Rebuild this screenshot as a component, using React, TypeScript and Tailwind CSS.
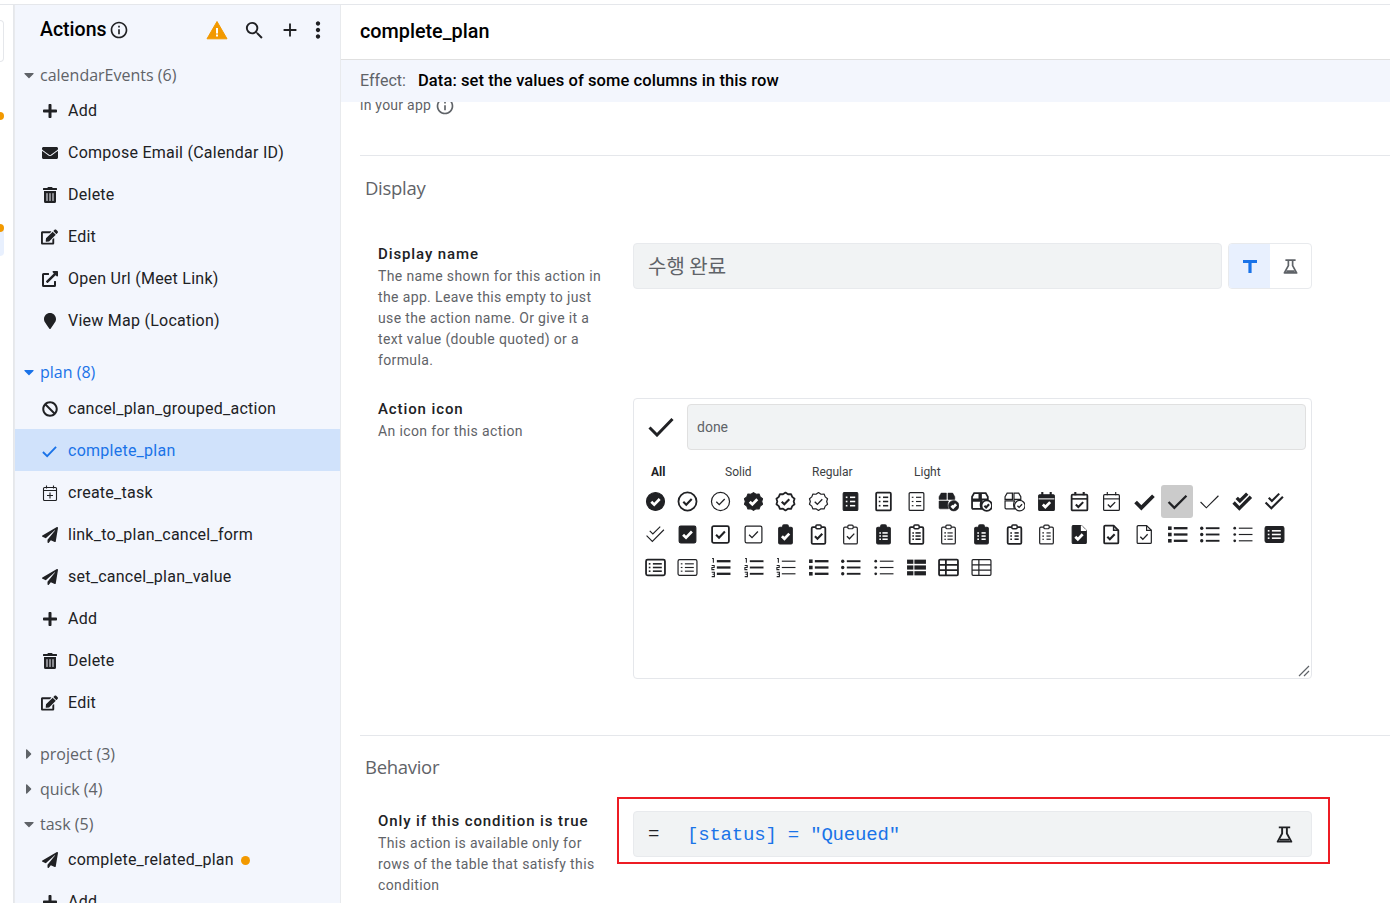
import React from 'react';
import {
  FaPlus, FaEnvelope, FaTrashAlt, FaEdit, FaExternalLinkAlt, FaMapMarker, FaBan, FaPaperPlane,
  FaCaretDown, FaCaretRight,
} from 'react-icons/fa';
import { MdSearch, MdAdd, MdMoreVert, MdOutlineInfo } from 'react-icons/md';

type Weight = 's' | 'r' | 'l';

const stroke = (w: Weight) => (w === 'r' ? 1.7 : 1.15);
const checkW = (w: Weight) => (w === 's' ? 2.6 : w === 'r' ? 2 : 1.25);

const Glyph = ({ kind, w }: { kind: string; w: Weight }) => {
  const solid = w === 's';
  const sw = stroke(w);
  const ink = '#202124';
  const body = { fill: solid ? ink : 'none', stroke: ink, strokeWidth: solid ? 1 : sw, strokeLinejoin: 'round' as const };
  const tick = (d: string) => (
    <path d={d} fill="none" stroke={solid ? '#fff' : ink} strokeWidth={checkW(w)} />
  );
  const lines = (ys: number[], x1: number, x2: number, bullets = 0) => (
    <g stroke={solid ? '#fff' : ink} strokeWidth={w === 'l' ? 1.1 : 1.5} fill="none">
      {ys.map(y => <path key={y} d={`M${x1} ${y}H${x2}`} />)}
      {bullets > 0 && ys.map(y => <path key={`b${y}`} d={`M${bullets} ${y}h1.6`} />)}
    </g>
  );
  let inner: React.ReactNode = null;
  if (kind === 'circle') {
    inner = <><circle cx="10" cy="10" r="8.6" {...body} />{tick('M6 10.2l2.8 2.8 5.2-5.4')}</>;
  } else if (kind === 'badge') {
    inner = (
      <>
        <path d="M10 1.5l2.4 1.6 2.9-.2 1.1 2.7 2.2 1.8-.8 2.6.8 2.6-2.2 1.8-1.1 2.7-2.9-.2L10 18.5l-2.4-1.6-2.9.2-1.1-2.7-2.2-1.8.8-2.6-.8-2.6 2.2-1.8 1.1-2.7 2.9.2z" {...body} />
        {tick('M6.4 10.2l2.5 2.5 4.7-4.9')}
      </>
    );
  } else if (kind === 'tasks') {
    inner = (
      <>
        <rect x="3" y="1.5" width="14" height="17" rx="1" {...body} />
        {lines([6, 10, 14], 9.5, 14.5, 5.5)}
      </>
    );
  } else if (kind === 'boxes') {
    inner = (
      <>
        <path d="M1 5.5l2-3.5h5v6H1zM9.5 2H14l2 3.5V8H9.5zM1 9.5h9c-1 2-1 5 0 7.5H2a1 1 0 01-1-1z" fill={solid ? ink : 'none'} stroke={ink} strokeWidth={solid ? 0.5 : sw} />
        <circle cx="15" cy="14" r="5" fill={solid ? ink : '#fff'} stroke={ink} strokeWidth={solid ? 0.5 : sw} />
        {tick('M12.8 14l1.6 1.6 2.8-3')}
      </>
    );
  } else if (kind === 'calendar') {
    inner = (
      <>
        <rect x="2.5" y="3.5" width="15" height="15" rx="1" {...body} />
        <path d="M6 1v3M14 1v3" stroke={ink} strokeWidth={w === 'l' ? 1.1 : 2} />
        <path d="M2.5 7.5h15" stroke={solid ? '#fff' : ink} strokeWidth={w === 'l' ? 1.1 : solid ? 1 : 1.5} />
        {tick('M6.5 12.8l2.4 2.4 4.6-4.6')}
      </>
    );
  } else if (kind === 'check') {
    inner = <path d="M1.5 10.5l5.5 5.5L18.5 4.5" fill="none" stroke={ink} strokeWidth={w === 's' ? 3.6 : w === 'r' ? 2.2 : 1.1} />;
  } else if (kind === 'double') {
    inner = (
      <g fill="none" stroke={ink} strokeWidth={w === 's' ? 3.2 : w === 'r' ? 2 : 1.1}>
        <path d="M1.5 11l5.5 5.5 11-11" />
        <path d="M4.5 6.5l3 3 7-7" />
      </g>
    );
  } else if (kind === 'square') {
    inner = <><rect x="2" y="2" width="16" height="16" rx="1.5" {...body} />{tick('M5.8 10.2l2.8 2.8 5.6-5.8')}</>;
  } else if (kind === 'clipCheck' || kind === 'clipList' || kind === 'clipTask') {
    inner = (
      <>
        <rect x="3.5" y="3" width="13" height="16" rx="1.2" {...body} />
        <rect x="7.5" y="1" width="5" height="3.5" rx="1" fill={solid ? ink : '#fff'} stroke={ink} strokeWidth={w === 'l' ? 1.1 : 1.4} />
        {kind === 'clipCheck' && tick('M6.6 11.6l2.4 2.4 4.6-4.8')}
        {kind === 'clipList' && lines([8.5, 11.5, 14.5], 9, 14, 6)}
        {kind === 'clipTask' && lines([8.5, 11.5, 14.5], 10, 14, 6)}
      </>
    );
  } else if (kind === 'file') {
    inner = (
      <>
        <path d="M4 1.5h8l4.5 4.5v11.5a1 1 0 01-1 1H4a1 1 0 01-1-1v-15a1 1 0 011-1z" {...body} />
        <path d="M12 1.5V6h4.5" fill={solid ? '#fff' : 'none'} stroke={solid ? '#fff' : ink} strokeWidth={w === 'l' ? 1.1 : 1.4} />
        {tick('M6 12.2l2.4 2.4 4.6-4.8')}
      </>
    );
  } else if (kind === 'ul') {
    inner = (
      <>
        <g fill={ink}>
          {[4, 10, 16].map(y => (w === 's'
            ? <rect key={y} x="1" y={y - 1.7} width="3.4" height="3.4" />
            : <circle key={y} cx="2.6" cy={y} r={w === 'r' ? 1.6 : 1.3} />))}
        </g>
        <g stroke={ink} strokeWidth={w === 's' ? 2.2 : w === 'r' ? 1.8 : 1.1}>
          {[4, 10, 16].map(y => <path key={y} d={`M6.5 ${y}H19.5`} />)}
        </g>
      </>
    );
  } else if (kind === 'alt') {
    inner = (
      <>
        <rect x="1" y="2.5" width="18" height="15" rx="1.5" {...body} />
        {lines([6.5, 10, 13.5], 7.5, 16, 3.6)}
      </>
    );
  } else if (kind === 'ol') {
    inner = (
      <>
        <g fill="none" stroke={ink} strokeWidth="1">
          <path d="M2 1.5h1.2v4" />
          <path d="M1.6 8h2.4v2H1.8v2h2.4" />
          <path d="M1.6 14.5h2.6v2H2.4h1.8v2.2H1.6" />
        </g>
        <g stroke={ink} strokeWidth={w === 's' ? 2.2 : w === 'r' ? 1.8 : 1.1}>
          {[4, 10, 16].map(y => <path key={y} d={`M6.5 ${y}H19.5`} />)}
        </g>
      </>
    );
  } else if (kind === 'table') {
    inner = solid ? (
      <g fill={ink}>
        <rect x="1" y="2.5" width="6" height="4" /><rect x="8" y="2.5" width="11" height="4" />
        <rect x="1" y="8" width="6" height="4" /><rect x="8" y="8" width="11" height="4" />
        <rect x="1" y="13.5" width="6" height="4" /><rect x="8" y="13.5" width="11" height="4" />
      </g>
    ) : (
      <>
        <rect x="1" y="2.5" width="18" height="15" rx="1" fill="none" stroke={ink} strokeWidth={sw} />
        <path d="M1 7.5h18M1 12.5h18M7.5 2.5v15" fill="none" stroke={ink} strokeWidth={sw} />
      </>
    );
  }
  return (
    <svg viewBox="0 0 20 20" className="w-[21px] h-[21px]">
      {inner}
    </svg>
  );
};

const glyphs: [string, Weight][] = [
  ['circle', 's'], ['circle', 'r'], ['circle', 'l'], ['badge', 's'], ['badge', 'r'], ['badge', 'l'],
  ['tasks', 's'], ['tasks', 'r'], ['tasks', 'l'], ['boxes', 's'], ['boxes', 'r'], ['boxes', 'l'],
  ['calendar', 's'], ['calendar', 'r'], ['calendar', 'l'], ['check', 's'], ['check', 'r'], ['check', 'l'],
  ['double', 's'], ['double', 'r'], ['double', 'l'], ['square', 's'], ['square', 'r'], ['square', 'l'],
  ['clipCheck', 's'], ['clipCheck', 'r'], ['clipCheck', 'l'], ['clipList', 's'], ['clipList', 'r'], ['clipList', 'l'],
  ['clipTask', 's'], ['clipTask', 'r'], ['clipTask', 'l'], ['file', 's'], ['file', 'r'], ['file', 'l'],
  ['ul', 's'], ['ul', 'r'], ['ul', 'l'], ['alt', 's'], ['alt', 'r'], ['alt', 'l'],
  ['ol', 's'], ['ol', 'r'], ['ol', 'l'], ['ul', 's'], ['ul', 'r'], ['ul', 'l'],
  ['table', 's'], ['table', 'r'], ['table', 'l'],
];

const Flask = ({ className }: { className: string }) => (
  <svg viewBox="0 0 20 20" className={className}>
    <path d="M4 2.5h12M7.5 3v6L2.8 17.5h14.4L12.5 9V3" fill="none" stroke="currentColor" strokeWidth="2" strokeLinejoin="round" />
    <path d="M5 15.5h10" fill="none" stroke="currentColor" strokeWidth="2" />
  </svg>
);

const CalendarAdd = () => (
  <svg viewBox="0 0 16 16" className="w-[16px] h-[16px]">
    <rect x="1.5" y="2.5" width="13" height="13" rx="1" fill="none" stroke="#202124" strokeWidth="1.1" />
    <path d="M4.5 0.5v3M11.5 0.5v3M1.5 5.5h13M8 7.5v6M5 10.5h6" fill="none" stroke="#202124" strokeWidth="1.1" />
  </svg>
);

const CheckThin = () => (
  <svg viewBox="0 0 16 16" className="w-[15px] h-[15px]">
    <path d="M1 8.5l4.5 4.5L15 3" fill="none" stroke="#1a73e8" strokeWidth="2" />
  </svg>
);

const Row = ({ icon, label, active, dot }: { icon: React.ReactNode; label: string; active?: boolean; dot?: boolean }) => (
  <div className={`h-[42px] flex items-center pl-[26px] pt-[2px] ${active ? 'bg-[#d0e2fb] text-[#1a73e8]' : 'text-[#202124]'}`}>
    <span className="w-[17px] flex justify-center text-[16px] mr-[10px]">{icon}</span>
    <span className="text-[16px] tracking-[0.25px]">{label}</span>
    {dot && <span className="w-[9px] h-[9px] rounded-full bg-[#f29900] ml-[7px]" />}
  </div>
);

const Group = ({ label, open, active, className }: { label: string; open?: boolean; active?: boolean; className?: string }) => (
  <div className={`h-[28px] flex items-center pl-[8px] text-[16px] font-['Open_Sans',sans-serif] ${active ? 'text-[#1a73e8]' : 'text-[#5f6368]'} ${className ?? ''}`}>
    <span className="w-[12px] flex justify-center mr-[5px] text-[16px]">
      {open ? <FaCaretDown /> : <FaCaretRight />}
    </span>
    <span>{label}</span>
  </div>
);

const Sidebar = () => (
  <aside className="w-[327px] shrink-0 bg-[#f3f6fd] border-l border-r border-[#e8eaed]">
    <div className="h-[50px] flex items-center pl-[25px] text-[#202124]">
      <span className="text-[19.5px] font-medium text-black">Actions</span>
      <MdOutlineInfo className="w-[20px] h-[20px] ml-[2px]" />
      <svg viewBox="0 0 22 20" className="w-[22px] h-[20px] ml-[77px]">
        <path d="M11 1.5L21 18.8H1z" fill="#f29900" stroke="#f29900" strokeLinejoin="round" />
        <path d="M10 8h2v5.5h-2zM10 14.5h2v2h-2z" fill="#fff" />
      </svg>
      <MdSearch className="w-[23px] h-[23px] ml-[15px]" />
      <MdAdd className="w-[22px] h-[22px] ml-[13px]" />
      <MdMoreVert className="w-[26px] h-[26px] ml-[4px]" />
    </div>
    <div className="pt-[6px]">
      <Group label="calendarEvents (6)" open />
      <Row icon={<FaPlus />} label="Add" />
      <Row icon={<FaEnvelope />} label="Compose Email (Calendar ID)" />
      <Row icon={<FaTrashAlt />} label="Delete" />
      <Row icon={<FaEdit className="text-[18px]" />} label="Edit" />
      <Row icon={<FaExternalLinkAlt />} label="Open Url (Meet Link)" />
      <Row icon={<FaMapMarker />} label="View Map (Location)" />
      <Group label="plan (8)" open active className="mt-[17px] mb-px" />
      <Row icon={<FaBan />} label="cancel_plan_grouped_action" />
      <Row icon={<CheckThin />} label="complete_plan" active />
      <Row icon={<CalendarAdd />} label="create_task" />
      <Row icon={<FaPaperPlane />} label="link_to_plan_cancel_form" />
      <Row icon={<FaPaperPlane />} label="set_cancel_plan_value" />
      <Row icon={<FaPlus />} label="Add" />
      <Row icon={<FaTrashAlt />} label="Delete" />
      <Row icon={<FaEdit className="text-[18px]" />} label="Edit" />
      <Group label="project (3)" className="mt-[17px]" />
      <Group label="quick (4)" className="mt-[7px]" />
      <Group label="task (5)" open className="mt-[7px]" />
      <Row icon={<FaPaperPlane />} label="complete_related_plan" dot />
      <Row icon={<FaPlus />} label="Add" />
    </div>
  </aside>
);

const Field = ({ title, children, className }: { title: string; children: React.ReactNode; className?: string }) => (
  <div className={`w-[273px] shrink-0 pl-[18px] pr-[28px] ${className ?? ''}`}>
    <div className="text-[15px] font-medium leading-[22px] tracking-[0.9px] text-[#202124]">{title}</div>
    <div className="pt-[1px] text-[14px] leading-[21px] tracking-[0.37px] text-[#5f6368]">{children}</div>
  </div>
);

const Main = () => (
  <main className="flex-1 min-w-0">
    <div className="h-[54px] flex items-center pl-[19px] text-[19.8px] font-medium text-black">complete_plan</div>
    <div className="h-[43px] border-t border-[#e0e0e0] bg-[#f3f6fd] flex items-center pl-[19px]">
      <span className="text-[16px] text-[#5f6368] w-[58px]">Effect:</span>
      <span className="text-[16.5px] tracking-[0.08px] text-black font-medium">Data: set the values of some columns in this row</span>
    </div>
    <div className="h-[53px] overflow-hidden pl-[19px]">
      <div className="-mt-[7px] flex items-center text-[14px] leading-[21px] tracking-[0.25px] text-[#5f6368]">
        in your app
        <MdOutlineInfo className="w-[20px] h-[20px] ml-[4px]" />
      </div>
    </div>
    <div className="ml-[19px] border-t border-[#e5e7eb] pt-[20px]">
      <h2 className="pl-[5px] text-[18.5px] leading-[24px] text-[#5f6368] font-['Open_Sans',sans-serif] tracking-[-0.3px]">Display</h2>
      <div className="flex mt-[43px]">
        <Field title="Display name">
          The name shown for this action in the app. Leave this empty to just use the action name. Or give it a text value (double quoted) or a formula.
        </Field>
        <div className="w-[679px] flex gap-[6px] h-[46px]">
          <div className="flex-1 bg-[#f1f3f4] border border-[#e8eaed] rounded-[4px] flex items-center pl-[14px] text-[20px] text-[#5f6368] font-['Noto_Sans_CJK_KR',sans-serif]">
            수행 완료
          </div>
          <div className="w-[84px] flex border border-[#e8eaed] rounded-[4px] overflow-hidden">
            <div className="flex-1 bg-[#e8f0fe] flex items-center justify-center text-[#1a73e8]">
              <svg viewBox="0 0 16 16" className="w-[16px] h-[16px]">
                <path d="M1 2h14v3H9.6v10H6.4V5H1z" fill="currentColor" />
              </svg>
            </div>
            <div className="flex-1 flex items-center justify-center text-[#5f6368]">
              <Flask className="w-[17px] h-[17px]" />
            </div>
          </div>
        </div>
      </div>
      <div className="flex mt-[27px]">
        <Field title="Action icon">An icon for this action</Field>
        <div className="w-[679px] h-[281px] relative border border-[#e5e7eb] rounded-[4px] pt-[5px] pr-[5px]">
          <div className="flex items-center">
            <span className="w-[53px] flex justify-center">
              <svg viewBox="0 0 26 20" className="w-[26px] h-[20px]">
                <path d="M1.5 10.5l7.5 7.5L24.5 2" fill="none" stroke="#202124" strokeWidth="3" />
              </svg>
            </span>
            <div className="flex-1 h-[46px] bg-[#f1f3f4] border border-[#e0e0e0] rounded-[4px] flex items-center pl-[9px] text-[14px] text-[#5f6368]">done</div>
          </div>
          <div className="flex mt-[15px] text-[12px] leading-[14px] text-[#3c4043]">
            <span className="w-[91px] pl-[17px] font-bold text-[#202124]">All</span>
            <span className="w-[87px]">Solid</span>
            <span className="w-[102px]">Regular</span>
            <span>Light</span>
          </div>
          <div className="grid grid-cols-[repeat(20,32.62px)] auto-rows-[33px] ml-[5px] mt-[6px]">
            {glyphs.map(([kind, w], i) => (
              <div key={i} className={`flex items-center justify-center rounded-[3px] ${i === 16 ? 'bg-[#cbcbcb]' : ''}`}>
                <Glyph kind={kind} w={w} />
              </div>
            ))}
          </div>
          <svg viewBox="0 0 12 12" className="absolute right-[1px] bottom-[1px] w-[12px] h-[12px]">
            <path d="M1 11L11 1M6 11l5-5" stroke="#5f6368" strokeWidth="1.2" fill="none" />
          </svg>
        </div>
      </div>
      <div className="border-t border-[#e5e7eb] mt-[56px] pt-[19px]">
        <h2 className="pl-[5px] text-[18.5px] leading-[24px] text-[#5f6368] font-['Open_Sans',sans-serif] tracking-[-0.3px]">Behavior</h2>
        <div className="flex mt-[18px]">
          <Field title="Only if this condition is true" className="pt-[13px]">
            This action is available only for rows of the table that satisfy this condition
          </Field>
          <div className="w-[713px] h-[67px] -ml-[16px] border-2 border-[#ed1c24] pl-[14px] pr-[16px] pt-[12px] pb-[5px] shrink-0">
            <div className="h-[46px] bg-[#f1f3f4] border border-[#e8eaed] rounded-[4px] flex items-center pl-[14px] pr-[17px]">
              <span className="w-[39px] text-[19px] text-[#202124] font-['Liberation_Mono',monospace]">=</span>
              <span className="flex-1 pt-[2px] text-[19px] tracking-[-0.2px] text-[#1a73e8] font-['Liberation_Mono',monospace] whitespace-pre">[status] = "Queued"</span>
              <Flask className="w-[19px] h-[19px] text-[#202124]" />
            </div>
          </div>
        </div>
      </div>
    </div>
  </main>
);

export default function App() {
  return (
    <div className="h-[903px] overflow-hidden bg-white font-['Roboto',sans-serif] pt-[4px]">
      <div className="h-full border-t border-[#e5e7eb] flex">
        <div className="w-[14px] shrink-0 border-r border-[#e5e7eb] overflow-hidden">
          <div className="mt-[15px] w-[4px] h-[42px] border-y border-r border-[#e5e7eb] rounded-r-[4px]" />
          <div className="relative mt-[50px] -ml-[4px] w-[8px] h-[8px] rounded-full bg-[#f29900]" />
          <div className="relative mt-[104px] -ml-[4px] w-[8px] h-[8px] rounded-full bg-[#f29900]" />
          <div className="-mt-[4px] w-[4px] h-[28px] bg-[#e8f0fe] rounded-r-[4px]" />
        </div>
        <Sidebar />
        <Main />
      </div>
    </div>
  );
}
